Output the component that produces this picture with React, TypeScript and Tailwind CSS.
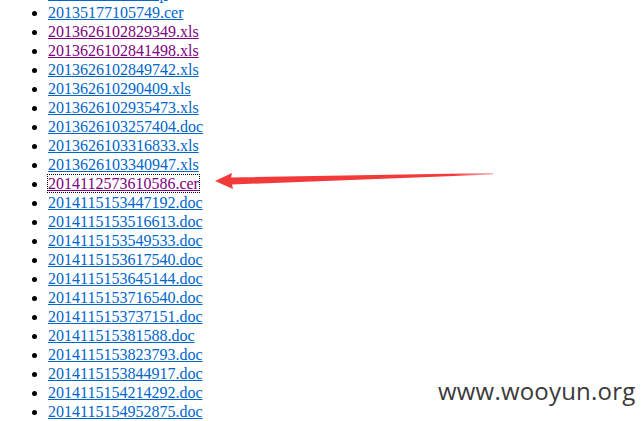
import React from 'react';

type FileLink = { name: string; visited?: boolean; focused?: boolean };

const files: FileLink[] = [
  { name: '201351771057.zip' },
  { name: '20135177105749.cer' },
  { name: '2013626102829349.xls', visited: true },
  { name: '2013626102841498.xls', visited: true },
  { name: '2013626102849742.xls' },
  { name: '201362610290409.xls' },
  { name: '2013626102935473.xls' },
  { name: '2013626103257404.doc' },
  { name: '2013626103316833.xls' },
  { name: '2013626103340947.xls' },
  { name: '2014112573610586.cer', visited: true, focused: true },
  { name: '2014115153447192.doc' },
  { name: '2014115153516613.doc' },
  { name: '2014115153549533.doc' },
  { name: '2014115153617540.doc' },
  { name: '2014115153645144.doc' },
  { name: '2014115153716540.doc' },
  { name: '2014115153737151.doc' },
  { name: '201411515381588.doc' },
  { name: '2014115153823793.doc' },
  { name: '2014115153844917.doc' },
  { name: '2014115154214292.doc' },
  { name: '2014115154952875.doc' },
];

export default function App() {
  return (
    <div className="relative w-[643px] h-[421px] overflow-hidden bg-white">
      {/* directory listing, scrolled a little */}
      <ul
        className="list-disc pl-12 -mt-[16px] text-[16px] leading-[19px] text-black"
        style={{ fontFamily: '"Liberation Serif", "Times New Roman", serif' }}
      >
        {files.map((f) => (
          <li key={f.name}>
            <a
              href="#"
              className={`underline ${f.visited ? 'text-[#800080]' : 'text-[#0066cc]'} ${
                f.focused ? 'outline outline-1 outline-dotted outline-black' : ''
              }`}
            >
              {f.name}
            </a>
          </li>
        ))}
      </ul>

      {/* red arrow annotation */}
      <svg className="absolute left-0 top-0 pointer-events-none" width="643" height="421">
        <defs>
          <linearGradient id="tail" x1="215" y1="0" x2="495" y2="0" gradientUnits="userSpaceOnUse">
            <stop offset="0" stopColor="#f23a3a" />
            <stop offset="0.85" stopColor="#f23a3a" />
            <stop offset="1" stopColor="#f23a3a" stopOpacity="0.35" />
          </linearGradient>
        </defs>
        <polygon
          points="215,181 232,173 231,177.5 493,173 493,174.6 232,184.5 233,189"
          fill="url(#tail)"
        />
      </svg>

      {/* watermark */}
      <div
        className="absolute left-[438px] top-[375px] text-[24px] leading-[32px] tracking-[0.2px] text-[#3a3a3a]"
        style={{ fontFamily: '"Open Sans", "Noto Sans", sans-serif' }}
      >
        www.wooyun.org
      </div>
    </div>
  );
}
